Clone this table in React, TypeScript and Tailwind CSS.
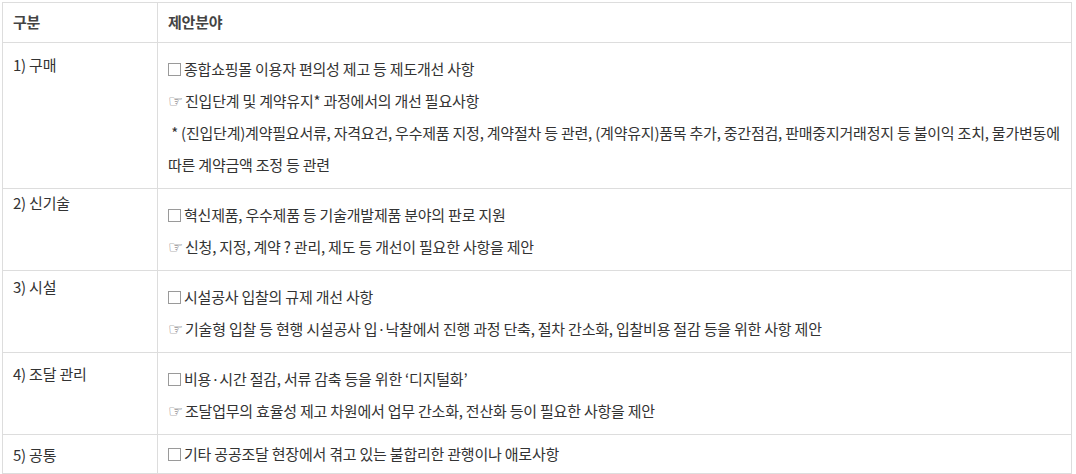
const rows = [
  {
    label: "1) 구매",
    pt: "pt-[14px]",
    lines: [
      { kind: "box", text: "종합쇼핑몰 이용자 편의성 제고 등 제도개선 사항" },
      { kind: "hand", text: "진입단계 및 계약유지* 과정에서의 개선 필요사항" },
      {
        kind: "plain",
        text: "\u00a0* (진입단계)계약필요서류, 자격요건, 우수제품 지정, 계약절차 등 관련, (계약유지)품목 추가, 중간점검, 판매중지거래정지 등 불이익 조치, 물가변동에",
      },
      { kind: "plain", text: "따른 계약금액 조정 등 관련" },
    ],
  },
  {
    label: "2) 신기술",
    pt: "pt-[6px]",
    lines: [
      { kind: "box", text: "혁신제품, 우수제품 등 기술개발제품 분야의 판로 지원" },
      { kind: "hand", text: "신청, 지정, 계약 ? 관리, 제도 등 개선이 필요한 사항을 제안" },
    ],
  },
  {
    label: "3) 시설",
    pt: "pt-[8px]",
    lines: [
      { kind: "box", text: "시설공사 입찰의 규제 개선 사항" },
      { kind: "hand", text: "기술형 입찰 등 현행 시설공사 입·낙찰에서 진행 과정 단축, 절차 간소화, 입찰비용 절감 등을 위한 사항 제안" },
    ],
  },
  {
    label: "4) 조달 관리",
    pt: "pt-[13px]",
    lines: [
      { kind: "box", text: "비용·시간 절감, 서류 감축 등을 위한 ‘디지털화’" },
      { kind: "hand", text: "조달업무의 효율성 제고 차원에서 업무 간소화, 전산화 등이 필요한 사항을 제안" },
    ],
  },
  {
    label: "5) 공통",
    pt: "pt-[12px]",
    single: true,
    lines: [{ kind: "box", text: "기타 공공조달 현장에서 겪고 있는 불합리한 관행이나 애로사항" }],
  },
];

type Line = { kind: string; text: string };

const Marker = ({ kind }: { kind: string }) => {
  if (kind === "box") {
    return <span className="w-[13px] h-[13px] border border-[#9a9a9a] mr-[3px] shrink-0" />;
  }
  if (kind === "hand") {
    return (
      <span className="text-[#666] text-[17px] leading-none mr-[2px] shrink-0" style={{ fontFamily: '"DejaVu Sans", sans-serif' }}>
        ☞
      </span>
    );
  }
  return null;
};

const App = () => {
  return (
    <div className="w-[1076px] h-[474px] bg-white pt-[2px] pl-[2px]" style={{ fontFamily: '"Noto Sans CJK KR", "Noto Sans", sans-serif' }}>
      <table className="w-[1070px] border-collapse border border-[#dddddd] text-[15px] tracking-[-0.22px] text-[#333]">
        <colgroup>
          <col className="w-[155px]" />
          <col />
        </colgroup>
        <thead>
          <tr>
            <th className="h-[40px] border border-[#dddddd] text-left font-bold text-[#444] px-[10px] py-0">구분</th>
            <th className="h-[40px] border border-[#dddddd] text-left font-bold text-[#444] px-[10px] py-0">제안분야</th>
          </tr>
        </thead>
        <tbody>
          {rows.map((row) => (
            <tr key={row.label}>
              <td className={`border border-[#dddddd] align-top px-[10px] leading-[16px] ${row.pt}`}>{row.label}</td>
              <td className={`border border-[#dddddd] align-top px-[10px] ${row.single ? "pt-[3px] pb-[3px]" : "pt-[10px] pb-[7px]"}`}>
                {row.lines.map((line: Line, i: number) => (
                  <div key={i} className="h-[32px] flex items-center whitespace-nowrap">
                    <Marker kind={line.kind} />
                    <span>{line.text}</span>
                  </div>
                ))}
              </td>
            </tr>
          ))}
        </tbody>
      </table>
    </div>
  );
};

export default App;
